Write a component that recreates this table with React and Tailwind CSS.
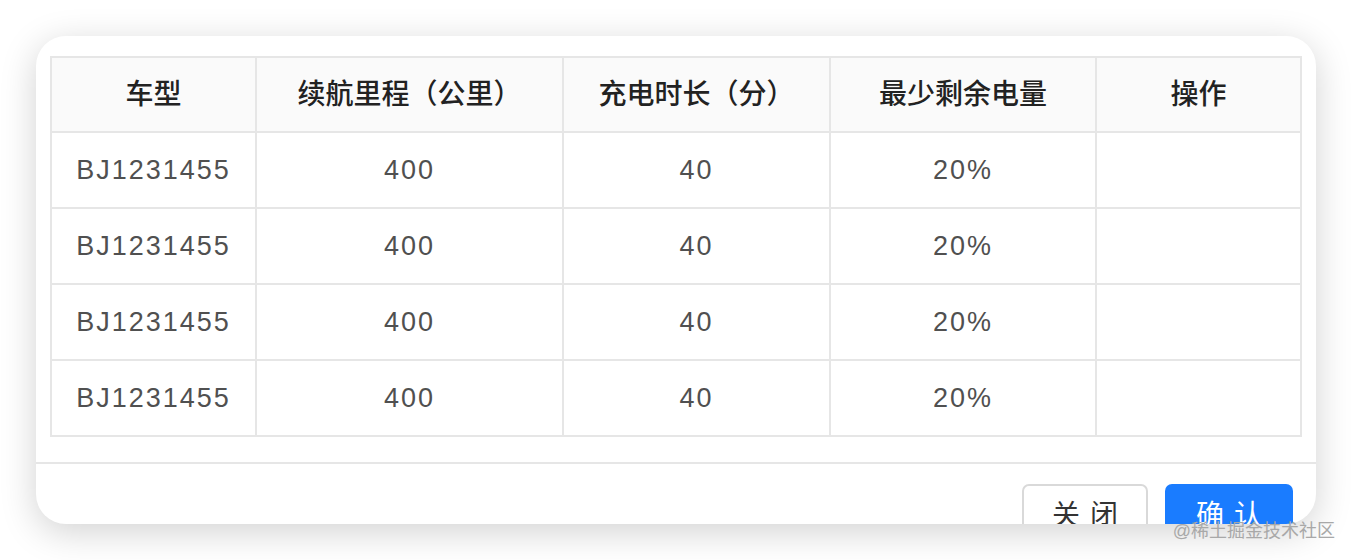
import React from "react";

const cols = [
  { title: "车型", w: "w-[205px]" },
  { title: "续航里程（公里）", w: "w-[307px]" },
  { title: "充电时长（分）", w: "w-[267px]" },
  { title: "最少剩余电量", w: "w-[266px]" },
  { title: "操作", w: "w-[205px]" },
];

const rows = [0, 1, 2, 3].map(() => ["BJ1231455", "400", "40", "20%", ""]);

export default function App() {
  return (
    <div
      className="relative w-[1352px] h-[560px] bg-white overflow-hidden pt-[36px] pl-[36px]"
      style={{ fontFamily: '"Liberation Sans", "Noto Sans CJK SC", sans-serif' }}
    >
      <div className="w-[1280px] h-[488px] bg-white rounded-[30px] overflow-hidden shadow-[0_8px_36px_rgba(0,0,0,0.18)] flex flex-col">
        <div className="pt-[20px] pl-[14px] pr-[16px]">
          <table className="w-[1250px] border-collapse table-fixed border-2 border-[#e6e6e6]">
            <colgroup>
              {cols.map((c, i) => (
                <col key={i} className={c.w} />
              ))}
            </colgroup>
            <thead>
              <tr className="h-[75px] bg-[#fafafa]">
                {cols.map((c, i) => (
                  <th
                    key={i}
                    className="border-2 border-[#e6e6e6] text-[28px] font-medium text-[#222] text-center p-0"
                  >
                    {c.title}
                  </th>
                ))}
              </tr>
            </thead>
            <tbody>
              {rows.map((r, ri) => (
                <tr key={ri} className="h-[76px]">
                  {r.map((v, ci) => (
                    <td
                      key={ci}
                      className="border-2 border-[#e6e6e6] text-[27px] text-[#505050] text-center p-0 tracking-[2px]"
                    >
                      {v}
                    </td>
                  ))}
                </tr>
              ))}
            </tbody>
          </table>
        </div>
        <div className="mt-[25px] border-t-2 border-[#e6e6e6] flex justify-end gap-[17px] pt-[20px] pr-[23px]">
          <button className="w-[126px] h-[64px] shrink-0 rounded-[7px] border-2 border-[#d9d9d9] bg-white text-[28px] text-[#333] leading-none tracking-[10px] pl-[10px]">
            关闭
          </button>
          <button className="w-[128px] h-[64px] shrink-0 rounded-[7px] bg-[#1a7cff] text-[28px] text-white leading-none tracking-[10px] pl-[10px]">
            确认
          </button>
        </div>
      </div>
      <div className="absolute right-[17px] top-[522px] text-[18px] text-[#a8a8a8] leading-none">
        @稀土掘金技术社区
      </div>
    </div>
  );
}
